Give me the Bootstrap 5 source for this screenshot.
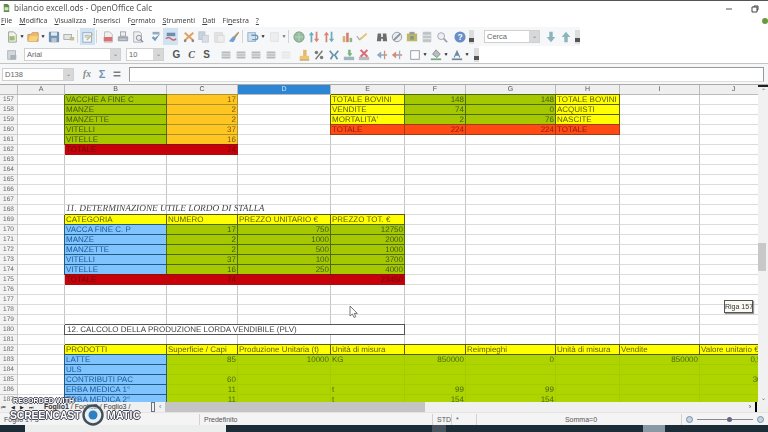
<!DOCTYPE html>
<html lang="it">
<head>
    <meta charset="UTF-8">
    <title>bilancio excell.ods - OpenOffice Calc</title>
    <link href="https://cdn.jsdelivr.net/npm/bootstrap@5.3.0/dist/css/bootstrap.min.css" rel="stylesheet">
    <style>
        html, body { width: 768px; height: 432px; overflow: hidden; background: #fff; }
        body { font-family: "Liberation Sans", Arial, sans-serif; font-size: 8px; color: #333; }
        #app { width: 768px; height: 432px; filter: blur(.45px); }

        .title-bar { height: 15px; border-top: 1px solid #555; font-family: "Noto Sans", sans-serif; font-size: 8.2px; color: #555; padding-left: 3px; }
        .menu-bar { height: 12px; font-family: "Noto Sans", sans-serif; font-size: 7px; color: #444; padding-left: 1px; gap: 7px; }
        .menu-bar u { text-underline-offset: 1px; }
        .win-btn { width: 26px; text-align: center; }
        .tool-row { height: 19px; background: #f6f7f8; }
        .tool-row.second { height: 18px; border-bottom: 1px solid #c4c4c4; }
        .tool-end { background: #fff; height: 100%; }
        .ic { width: 15px; height: 15px; flex: none; display: flex; align-items: center; justify-content: center; }
        .ic svg { width: 12px; height: 12px; opacity: .7; }
        .ic.on { background: #cfe3f3; height: 17px; }
        .ar { width: 6px; flex: none; text-align: center; font-size: 5px; line-height: 1; color: #222; }
        .sp3 { width: 3px; flex: none; } .sp4 { width: 4px; flex: none; } .sp5 { width: 5px; flex: none; }
        .sep { width: 1px; height: 13px; background: #d4d4d4; flex: none; margin: 0 2px 0 1px; }
        .grip { width: 4px; height: 14px; flex: none; background-image: radial-gradient(#aaa 35%, transparent 40%); background-size: 2px 2px; }
        .more { width: 5px; height: 14px; flex: none; background: linear-gradient(#ddd 60%, #555 60%, #555 85%, #ddd 85%); }
        .combo { height: 13px; background: #fff; border: 1px solid #d0d0d0; flex: none; display: flex; color: #666; font-size: 7.5px; line-height: 11px; padding-left: 2px; justify-content: space-between; padding-right: 0; }
        .combo i { width: 10px; background: #d8d8d8; color: #777; font-style: normal; font-size: 6px; text-align: center; }
        .letter { width: 15px; flex: none; text-align: center; font-size: 10px; font-weight: 700; color: #555; }

        .formula-bar { height: 21px; background: #f6f7f8; padding: 1px 4px 1px 2px; border-bottom: 1px solid #aaa; }
        .formula-input { flex: 1; height: 15px; background: #fff; border: 1px solid #999; border-bottom-color: #ddd; margin-left: 5px; }

        .sheet-main { height: 317px; }
        .grid-wrap { width: 758px; height: 317px; overflow: hidden; }
        table.sheet { table-layout: fixed; width: 768px; border-collapse: separate; border-spacing: 0; font-size: 8px; text-rendering: geometricPrecision; }
        table.sheet th, table.sheet td { height: 10px; padding: 0 1px; line-height: 9px; white-space: nowrap; border-style: solid; border-width: 0 1px 1px 0; border-color: #dcdcdc #c6c6c6; color: #333; font-weight: 400; }
        table.sheet thead th { background: #efefef; color: #555; text-align: center; font-size: 7px; border-color: #bbb; }
        table.sheet thead th.cur { background: #2c86d4; color: #cfe6fa; }
        table.sheet tbody th { background: #f3f3f3; color: #666; text-align: center; font-size: 6.5px; border-color: #ccc; }
        td.num { text-align: right; }
        /* right + bottom are the cell's border, left + top a shadow laid over the neighbour's border */
        table.sheet td.g { background: #a6c800; color: #3e5a10; border-color: #4e6a12; box-shadow: -1px 0 0 #4e6a12, 0 -1px 0 #4e6a12; }
        table.sheet td.o { background: #ffc521; color: #7a5a10; border-color: #a89430; box-shadow: 0 -1px 0 #a89430; }
        table.sheet td.y { background: #ffff00; color: #5c5c08; border-color: #5a5a10; box-shadow: -1px 0 0 #5a5a10, 0 -1px 0 #5a5a10; }
        table.sheet td.f { background: #ff4a14; color: #8e1c10; border-color: #a03a10; box-shadow: -1px 0 0 #a03a10, 0 -1px 0 #a03a10; }
        table.sheet td.r { background: #c8000a; color: #6a0a0a; border-color: #a81010; box-shadow: 0 -1px 0 #8a1010; }
        table.sheet td.b { background: #80c4ff; color: #1f5a96; border-color: #235a80; box-shadow: -1px 0 0 #235a80, 0 -1px 0 #235a80; }
        table.sheet td.l { background: #aed500; color: #4a6a10; border-color: #a6cc00; }
        table.sheet td.box { border-color: #555; box-shadow: -1px 0 0 #555, 0 -1px 0 #555; color: #444; font-size: 8px; padding-left: 2px; }
        table.sheet td.head11 { font-family: "Liberation Serif", serif; font-style: italic; font-size: 9.3px; color: #444; vertical-align: bottom; overflow: visible; }

        .vscroll { width: 10px; background: #f1f1f1; position: relative; }
        .vscroll .thumb { position: absolute; left: 0; top: 158px; width: 8px; height: 28px; background: #c8c8c8; }
        .vscroll .tick { height: 2px; background: #222; }
        .arrow-txt { font-size: 6px; line-height: 8px; color: #666; text-align: center; }

        .tab-bar { height: 10px; background: #f0f0f0; font-size: 7px; line-height: 10px; color: #333; }
        .tab-nav { width: 44px; padding-left: 1px; font-size: 5px; gap: 5px; color: #222; }
        .tab-list { width: 107px; white-space: nowrap; }
        .tab-list b { font-weight: 700; }
        .hthumb { width: 260px; height: 10px; background: #c4c4c4; }
        .htrack { flex: 1; }

        .status-bar { height: 13px; background: #f4f4f4; font-size: 7px; line-height: 13px; color: #555; border-top: 1px solid #e4e4e4; }
        .st { border-right: 1px solid #d2d2d2; height: 11px; line-height: 11px; padding-left: 4px; flex: none; }
        .zoom-track { flex: 1; height: 1px; background: #889; position: relative; }
        .zoom-dot { position: absolute; left: 30px; top: -2px; width: 5px; height: 5px; border-radius: 50%; background: #668; }
        .zoom-btn { width: 7px; height: 7px; border-radius: 50%; border: 1px solid #7a8ea0; background: #c4d4e2; flex: none; }

        .task-bar { height: 7px; background: #1d2d38; }
        .task-light { width: 201px; margin-left: 25px; height: 7px; background: #eceded; }
        .task-item { height: 7px; background: #46535c; flex: none; }

        .tip-box { position: absolute; left: 724px; top: 300px; width: 29px; height: 13px; background: #fbfbf4; border: 1px solid #555; box-shadow: 1px 1px 1px #999; font-size: 7px; line-height: 11px; text-align: center; color: #333; white-space: nowrap; }
        .cursor-pos { position: absolute; left: 349px; top: 305px; width: 9px; height: 13px; }
        .wm { position: absolute; left: 0; top: 394px; width: 160px; height: 32px; color: #fff; font-weight: 700; text-shadow: -1px 0 0 #445, 1px 0 0 #445, 0 -1px 0 #445, 0 1px 0 #445; }
        .wm-top { position: absolute; left: 13px; top: 2px; font-size: 7px; letter-spacing: .1px; white-space: nowrap; }
        .wm-main { position: absolute; left: 10px; top: 14px; font-size: 10.500px; letter-spacing: -.2px; }
        .wm-side { position: absolute; left: 107px; top: 14px; font-size: 10.500px; letter-spacing: .2px; }
        .wm-ring { position: absolute; left: 82px; top: 10px; width: 22px; height: 22px; }
    </style>
</head>
<body class="position-relative">
<svg width="0" height="0" class="position-absolute">
    <symbol id="i-doc" viewBox="0 0 14 14"><path d="M3 1h6l3 3v9H3z" fill="#eee" stroke="#6a7a50"/><rect x="4" y="6" width="6" height="5" fill="#7ba23a"/></symbol>
    <symbol id="i-open" viewBox="0 0 14 14"><path d="M1 4h4l1-2h7v10H1z" fill="#f0a030" stroke="#b06a10"/><path d="M4 6h9l-2 6H1z" fill="#f7c64c"/></symbol>
    <symbol id="i-save" viewBox="0 0 14 14"><rect x="1" y="1" width="12" height="12" rx="1" fill="#3a6a94"/><rect x="3.500" y="1.500" width="7" height="4" fill="#dce6ee"/><rect x="4" y="8" width="6" height="5" fill="#9ab4c8"/></symbol>
    <symbol id="i-mail" viewBox="0 0 14 14"><rect x="1" y="4" width="9" height="6" fill="#ddd" stroke="#888"/><rect x="8" y="7" width="5" height="4" fill="#b0a070"/></symbol>
    <symbol id="i-edit" viewBox="0 0 14 14"><rect x="1" y="2" width="10" height="11" fill="#fff" stroke="#7a8a9a"/><path d="M3 5h6M3 7h5" stroke="#88a"/><path d="M5 10l7-7 1 1-7 7z" fill="#c8a830"/></symbol>
    <symbol id="i-pdf" viewBox="0 0 14 14"><path d="M3 1h6l3 3v9H3z" fill="#eee" stroke="#999"/><rect x="2" y="7" width="10" height="5" fill="#d03838"/></symbol>
    <symbol id="i-print" viewBox="0 0 14 14"><rect x="4" y="1" width="6" height="5" fill="#eee" stroke="#778"/><rect x="1" y="6" width="12" height="6" rx="1" fill="#7c8894"/><rect x="3" y="9" width="8" height="1" fill="#ddd"/></symbol>
    <symbol id="i-prev" viewBox="0 0 14 14"><path d="M2 1h7l2 2v10H2z" fill="#eee" stroke="#889"/><circle cx="8" cy="8" r="3" fill="#dfe9f0" stroke="#556"/><path d="M10 10l3 3" stroke="#556" stroke-width="1.500"/></symbol>
    <symbol id="i-spell" viewBox="0 0 14 14"><path d="M2 8l4 4 6-9-6 5-2-2z" fill="#3b78a8"/><path d="M3 1h8v3H3z" fill="#6c8aa0"/></symbol>
    <symbol id="i-aspell" viewBox="0 0 14 14"><rect x="2" y="2" width="10" height="4" fill="#4a6a90"/><path d="M1 9q3-3 6 0t6 0" fill="none" stroke="#d03030" stroke-width="1.600"/></symbol>
    <symbol id="i-cut" viewBox="0 0 14 14"><path d="M2 2l10 9M12 2L2 11" stroke="#d87a20" stroke-width="2.200"/><circle cx="2.500" cy="11.500" r="1.500" fill="#555"/><circle cx="11.500" cy="11.500" r="1.500" fill="#555"/></symbol>
    <symbol id="i-copy" viewBox="0 0 14 14"><rect x="1" y="1" width="7" height="9" fill="#b4c4d4" stroke="#a0aab4"/><rect x="5" y="5" width="7" height="8" fill="#ccd6e0" stroke="#b0b8c0"/></symbol>
    <symbol id="i-paste" viewBox="0 0 14 14"><rect x="2" y="2" width="9" height="11" fill="#ddd" stroke="#ccc"/><rect x="5" y="5" width="8" height="8" fill="#eaeaea" stroke="#ccc"/></symbol>
    <symbol id="i-brush" viewBox="0 0 14 14"><path d="M12 1L6 7l2 2 5-7z" fill="#8a6a30"/><path d="M6 6l3 3-3 4-5-1z" fill="#3a7ac0"/></symbol>
    <symbol id="i-undo" viewBox="0 0 14 14"><rect x="1" y="2" width="9" height="10" fill="#c8d8e8" stroke="#5a8ab0"/><path d="M5 5h5a2 2 0 010 5H6" fill="none" stroke="#2a70a8" stroke-width="1.600"/></symbol>
    <symbol id="i-redo" viewBox="0 0 14 14"><rect x="3" y="2" width="9" height="10" fill="#e8ecee" stroke="#d4d8dc"/></symbol>
    <symbol id="i-nav" viewBox="0 0 14 14"><circle cx="7" cy="7" r="6" fill="#6fa47a" stroke="#4a7a58"/><path d="M2 7h10M7 2v10" stroke="#a8ccb0"/></symbol>
    <symbol id="i-sa" viewBox="0 0 14 14"><path d="M4 1l3 4H5v8H3V5H1z" fill="#2f8f9f"/><path d="M10 13l3-4h-2V1H9v8H7z" fill="#d0503a"/></symbol>
    <symbol id="i-sd" viewBox="0 0 14 14"><path d="M4 1l3 4H5v8H3V5H1z" fill="#d0503a"/><path d="M10 13l3-4h-2V1H9v8H7z" fill="#2f8f9f"/></symbol>
    <symbol id="i-chart" viewBox="0 0 14 14"><rect x="2" y="6" width="3" height="7" fill="#d09030"/><rect x="6" y="2" width="3" height="11" fill="#c05040"/><rect x="10" y="8" width="3" height="5" fill="#6a9a40"/></symbol>
    <symbol id="i-pen" viewBox="0 0 14 14"><path d="M1 6l3 4 2-2" fill="none" stroke="#88a" stroke-width="1.400"/><path d="M5 11l8-7-1-2-8 7z" fill="#d8b040"/></symbol>
    <symbol id="i-bino" viewBox="0 0 14 14"><path d="M2 3h4v4h2V3h4l1 9H8V9H6v3H1z" fill="#333"/></symbol>
    <symbol id="i-comp" viewBox="0 0 14 14"><circle cx="7" cy="7" r="5.500" fill="#e4e8ec" stroke="#667"/><path d="M3 11l8-8" stroke="#567" stroke-width="2"/></symbol>
    <symbol id="i-gal" viewBox="0 0 14 14"><rect x="1" y="3" width="12" height="9" fill="#a89a30"/><rect x="4" y="1" width="6" height="3" fill="#777"/><rect x="5" y="6" width="4" height="4" fill="#3a7a4a"/></symbol>
    <symbol id="i-db" viewBox="0 0 14 14"><rect x="2" y="1" width="10" height="12" rx="1" fill="#aab0b4"/><path d="M2 5h10M2 9h10" stroke="#eee"/></symbol>
    <symbol id="i-mag" viewBox="0 0 14 14"><circle cx="6" cy="6" r="4" fill="#e6eef4" stroke="#778"/><path d="M9 9l4 4" stroke="#778" stroke-width="2"/></symbol>
    <symbol id="i-down" viewBox="0 0 14 14"><path d="M5 1h4v6h3l-5 6-5-6h3z" fill="#5f9aa0"/></symbol>
    <symbol id="i-up" viewBox="0 0 14 14"><path d="M5 13h4V7h3L7 1 2 7h3z" fill="#5f9aa0"/></symbol>
    <symbol id="i-style" viewBox="0 0 14 14"><rect x="2" y="2" width="9" height="10" fill="#c4ccd4" stroke="#8a949c"/><rect x="5" y="7" width="7" height="5" fill="#8a949c"/></symbol>
    <symbol id="i-al" viewBox="0 0 14 14"><rect x="2" y="3" width="10" height="8" fill="#8c9298"/><path d="M2 5h10M2 7h10M2 9h10" stroke="#e8e8e8"/></symbol>
    <symbol id="i-cur" viewBox="0 0 14 14"><rect x="6" y="1" width="4" height="10" fill="#d8a030"/><rect x="2" y="8" width="11" height="5" fill="#e8b040"/><path d="M2 13h11" stroke="#a06a10"/></symbol>
    <symbol id="i-pct" viewBox="0 0 14 14"><path d="M3 12L11 2" stroke="#444" stroke-width="1.600"/><circle cx="4" cy="4" r="2" fill="#444"/><circle cx="10" cy="10" r="2" fill="#444"/></symbol>
    <symbol id="i-n1" viewBox="0 0 14 14"><path d="M2 2l4 5-3 5M12 2L8 7l3 5" fill="none" stroke="#2a6a90" stroke-width="2"/></symbol>
    <symbol id="i-n2" viewBox="0 0 14 14"><rect x="1" y="9" width="12" height="4" fill="#7a9aa4"/><path d="M6 1h3v4h2l-3 4-3-4h1z" fill="#4a9a50"/></symbol>
    <symbol id="i-n3" viewBox="0 0 14 14"><rect x="1" y="9" width="12" height="4" fill="#a0a4a8"/><path d="M3 1l8 8M11 1L3 9" stroke="#d03040" stroke-width="2.400"/></symbol>
    <symbol id="i-in" viewBox="0 0 14 14"><path d="M1 7l5-4v3h7v2H6v3z" fill="#5a8ab0"/><path d="M10 2v10" stroke="#d06040" stroke-width="1.500"/></symbol>
    <symbol id="i-out" viewBox="0 0 14 14"><path d="M1 7l5-4v3h7v2H6v3z" fill="#c86040"/><path d="M10 2v10" stroke="#6a94b4" stroke-width="1.500"/></symbol>
    <symbol id="i-bord" viewBox="0 0 14 14"><rect x="2" y="2" width="10" height="10" fill="#fff" stroke="#667"/></symbol>
    <symbol id="i-fill" viewBox="0 0 14 14"><path d="M3 6l4-5 5 5-4 4z" fill="#9aa8a0" stroke="#556"/><rect x="1" y="11" width="12" height="2" fill="#3a8a50"/></symbol>
    <symbol id="i-txt" viewBox="0 0 14 14"><path d="M7 1l4 9H9.500L8.700 8H5.300L4.500 10H3z" fill="#3a5a80"/><rect x="1" y="11" width="12" height="2" fill="#3a5a80"/></symbol>
</svg>

<div id="app" class="d-flex flex-column">
    <!-- title + menu -->
    <div class="title-bar d-flex align-items-center">
        <svg width="7" height="10" viewBox="0 0 9 10" class="me-1"><path d="M1 0h5l2 2v8H1z" fill="#5f8f4a"/><rect x="2" y="4" width="5" height="4" fill="#d8e4c8"/></svg>
        <span>bilancio excell.ods - OpenOffice Calc</span>
        <div class="ms-auto d-flex align-items-center">
            <span class="win-btn"><svg width="8" height="8"><path d="M1 4h6" stroke="#555"/></svg></span>
            <span class="win-btn"><svg width="8" height="8"><path d="M1 2h5v5H1zM3 2V1h4v4H6" fill="none" stroke="#444"/></svg></span>
        </div>
    </div>
    <div class="menu-bar d-flex align-items-center">
        <span><u>F</u>ile</span><span><u>M</u>odifica</span><span><u>V</u>isualizza</span><span><u>I</u>nserisci</span><span>F<u>o</u>rmato</span><span><u>S</u>trumenti</span><span><u>D</u>ati</span><span>Fi<u>n</u>estra</span><span><u>?</u></span>
        <svg class="ms-auto" width="7" height="8"><circle cx="4" cy="4" r="3" fill="#6a9a3a"/></svg>
    </div>

    <!-- standard toolbar -->
    <div class="tool-row d-flex align-items-center">
        <span class="grip"></span>
        <span class="ic"><svg><use href="#i-doc"/></svg></span><span class="ar">&#9660;</span>
        <span class="ic"><svg><use href="#i-open"/></svg></span><span class="ar">&#9660;</span>
        <span class="ic"><svg><use href="#i-save"/></svg></span>
        <span class="ic"><svg><use href="#i-mail"/></svg></span>
        <span class="sep"></span><span class="ic on"><svg><use href="#i-edit"/></svg></span><span class="sep" style="margin-right:3px"></span>
        <span class="ic"><svg><use href="#i-pdf"/></svg></span>
        <span class="ic"><svg><use href="#i-print"/></svg></span>
        <span class="ic"><svg><use href="#i-prev"/></svg></span>
        <span class="sp3"></span>
        <span class="ic"><svg><use href="#i-spell"/></svg></span>
        <span class="ic on"><svg><use href="#i-aspell"/></svg></span>
        <span class="sp3"></span>
        <span class="ic"><svg><use href="#i-cut"/></svg></span>
        <span class="ic"><svg><use href="#i-copy"/></svg></span>
        <span class="ic"><svg><use href="#i-paste"/></svg></span>
        <span class="ic"><svg><use href="#i-brush"/></svg></span>
        <span class="sep"></span>
        <span class="ic"><svg><use href="#i-undo"/></svg></span><span class="ar">&#9660;</span>
        <span class="ic"><svg><use href="#i-redo"/></svg></span><span class="ar text-secondary">&#9660;</span>
        <span class="sep"></span>
        <span class="ic"><svg><use href="#i-nav"/></svg></span>
        <span class="ic"><svg><use href="#i-sa"/></svg></span>
        <span class="ic"><svg><use href="#i-sd"/></svg></span>
        <span class="sp3"></span>
        <span class="ic"><svg><use href="#i-chart"/></svg></span>
        <span class="ic"><svg><use href="#i-pen"/></svg></span>
        <span class="sp5"></span>
        <span class="ic"><svg><use href="#i-bino"/></svg></span>
        <span class="ic"><svg><use href="#i-comp"/></svg></span>
        <span class="ic"><svg><use href="#i-gal"/></svg></span>
        <span class="ic"><svg><use href="#i-db"/></svg></span>
        <span class="ic"><svg><use href="#i-mag"/></svg></span>
        <span class="sp3"></span>
        <span class="ic"><svg viewBox="0 0 14 14"><circle cx="7" cy="7" r="6.500" fill="#2b63b4"/><text x="7" y="10.500" text-anchor="middle" font-size="10" font-weight="700" fill="#fff" font-family="Liberation Sans">?</text></svg></span>
        <span class="more" style="margin-left:2px"></span>
        <span class="grip" style="width:3px;margin-left:6px"></span>
        <span class="combo" style="width:56px;margin-left:1px">Cerca<i>&#8964;</i></span>
        <span class="sp3"></span>
        <span class="ic"><svg><use href="#i-down"/></svg></span>
        <span class="ic"><svg><use href="#i-up"/></svg></span>
        <span class="more" style="margin-left:2px"></span>
        <span class="tool-end flex-grow-1"></span>
    </div>

    <!-- formatting toolbar -->
    <div class="tool-row second d-flex align-items-center">
        <span class="grip"></span>
        <span class="ic"><svg><use href="#i-style"/></svg></span>
        <span class="combo" style="width:97px;margin-left:5px">Arial<i>&#8964;</i></span>
        <span class="combo" style="width:38px;margin-left:5px">10<i>&#8964;</i></span>
        <span class="sp5"></span>
        <span class="letter">G</span><span class="letter fst-italic" style="font-family:'Liberation Serif',serif">C</span><span class="letter">S</span>
        <span class="sp4"></span>
        <span class="ic"><svg><use href="#i-al"/></svg></span>
        <span class="ic"><svg><use href="#i-al"/></svg></span>
        <span class="ic"><svg><use href="#i-al"/></svg></span>
        <span class="ic"><svg><use href="#i-al"/></svg></span>
        <span class="ic opacity-25"><svg><use href="#i-al"/></svg></span>
        <span class="sp3"></span>
        <span class="ic"><svg><use href="#i-cur"/></svg></span>
        <span class="ic"><svg><use href="#i-pct"/></svg></span>
        <span class="ic"><svg><use href="#i-n1"/></svg></span>
        <span class="ic"><svg><use href="#i-n2"/></svg></span>
        <span class="ic"><svg><use href="#i-n3"/></svg></span>
        <span class="sp3"></span>
        <span class="ic"><svg><use href="#i-in"/></svg></span>
        <span class="ic"><svg><use href="#i-out"/></svg></span>
        <span class="sp3"></span>
        <span class="ic"><svg><use href="#i-bord"/></svg></span><span class="ar">&#9660;</span>
        <span class="ic"><svg><use href="#i-fill"/></svg></span><span class="ar">&#9660;</span>
        <span class="ic"><svg><use href="#i-txt"/></svg></span><span class="ar">&#9660;</span>
        <span class="more" style="margin-left:4px"></span>
        <span class="tool-end flex-grow-1"></span>
    </div>

    <!-- formula bar -->
    <div class="formula-bar d-flex align-items-center">
        <span class="combo" style="width:72px">D138<i>&#8964;</i></span>
        <span class="sp5"></span>
        <span class="ic"><svg viewBox="0 0 14 14"><text x="7" y="11" text-anchor="middle" font-size="11" font-style="italic" font-weight="700" font-family="Liberation Serif" fill="#555">fx</text></svg></span>
        <span class="ic"><svg viewBox="0 0 14 14"><text x="7" y="12" text-anchor="middle" font-size="13" font-weight="700" font-family="Liberation Sans" fill="#3a6a9a">&#931;</text></svg></span>
        <span class="ic"><svg viewBox="0 0 14 14"><path d="M3 5h8M3 9h8" stroke="#445" stroke-width="1.600"/></svg></span>
        <div class="formula-input"></div>
    </div>

    <!-- sheet -->
    <div class="sheet-main d-flex">
        <div class="grid-wrap">
            <table class="sheet">
                <colgroup><col style="width:18px"><col style="width:47px"><col style="width:102px"><col style="width:71px"><col style="width:93px"><col style="width:74px"><col style="width:61px"><col style="width:90px"><col style="width:64px"><col style="width:80px"><col style="width:68px"></colgroup>
                <thead><tr><th></th><th>A</th><th>B</th><th>C</th><th class="cur">D</th><th>E</th><th>F</th><th>G</th><th>H</th><th>I</th><th>J</th></tr></thead>
                <tbody id="rows"></tbody>
            </table>
        </div>
        <div class="vscroll flex-grow-1">
            <div class="tick"></div>
            <div class="arrow-txt">&#8963;</div>
            <div class="thumb"></div>
            <div class="arrow-txt position-absolute bottom-0 w-100">&#8964;</div>
        </div>
    </div>

    <!-- tabs + horizontal scrollbar -->
    <div class="tab-bar d-flex">
        <div class="tab-nav d-flex">
            <span>&#9198;</span><span>&#9664;</span><span>&#9654;</span><span>&#9197;</span>
        </div>
        <div class="tab-list"><b>Foglio1</b> / Foglio2 / Foglio3 /</div>
        <span class="border border-secondary" style="width:4px;height:10px"></span>
        <span class="px-1 text-secondary">&#8249;</span>
        <div class="hthumb"></div>
        <div class="htrack"></div>
        <span class="pe-1">&#8250;</span>
        <span class="bg-black" style="width:2px;height:10px;margin-right:11px"></span>
    </div>

    <!-- status bar -->
    <div class="status-bar d-flex align-items-center">
        <span class="st" style="width:200px">Foglio 1 / 3</span>
        <span class="st" style="width:233px">Predefinito</span>
        <span class="st" style="width:19px">STD</span>
        <span class="st" style="width:25px">*</span>
        <span class="st text-center" style="width:205px">Somma=0</span>
        <div class="d-flex align-items-center flex-grow-1 ps-1 pe-1 gap-1">
            <span class="zoom-btn"></span><span class="zoom-track"><span class="zoom-dot"></span></span><span class="zoom-btn"></span>
        </div>
    </div>

    <!-- taskbar -->
    <div class="task-bar d-flex">
        <div class="task-light"></div>
        <div class="task-item" style="width:14px;margin-left:206px"></div>
        <div class="task-item" style="width:22px;margin-left:197px;background:#8a9aa4"></div>
    </div>

    <div class="tip-box">Riga 157</div>
    <svg class="cursor-pos" viewBox="0 0 9 13"><path d="M1 1v10l2.500-2 1.500 3.500 1.800-.8-1.500-3.300h3z" fill="#fff" stroke="#555" stroke-width=".8"/></svg>

    <div class="wm">
        <span class="wm-top">RECORDED WITH</span>
        <span class="wm-main">SCREENCAST</span>
        <svg class="wm-ring" viewBox="0 0 22 22"><circle cx="11" cy="11" r="9.500" fill="#e8eef2" fill-opacity=".5" stroke="#3f4f5c" stroke-width="2.400"/><circle cx="11" cy="11" r="4.500" fill="#2d7fc4"/></svg>
        <span class="wm-side">MATIC</span>
    </div>
</div>

<script src="https://cdn.jsdelivr.net/npm/bootstrap@5.3.0/dist/js/bootstrap.bundle.min.js"></script>
<script>
    // cell = [text, class, right aligned]
    const cols = ['A','B','C','D','E','F','G','H','I','J'];
    const data = {
        157:{B:['VACCHE A FINE C','g'],C:['17','o',1],E:['TOTALE BOVINI','y'],F:['148','g',1],G:['148','g',1],H:['TOTALE BOVINI','y']},
        158:{B:['MANZE','g'],C:['2','o',1],E:['VENDITE','y'],F:['74','g',1],G:['0','g',1],H:['ACQUISTI','y']},
        159:{B:['MANZETTE','g'],C:['2','o',1],E:["MORTALITA'",'y'],F:['2','g',1],G:['76','g',1],H:['NASCITE','y']},
        160:{B:['VITELLI','g'],C:['37','o',1],E:['TOTALE','f'],F:['224','f',1],G:['224','f',1],H:['TOTALE','f']},
        161:{B:['VITELLE','g'],C:['16','o',1]},
        162:{B:['TOTALE','r'],C:['74','r',1]},
        168:{B:['11. DETERMINAZIONE UTILE LORDO DI STALLA','head11']},
        169:{B:['CATEGORIA','y'],C:['NUMERO','y'],D:['PREZZO UNITARIO €','y'],E:['PREZZO TOT. €','y']},
        170:{B:['VACCA FINE C. P','b'],C:['17','g',1],D:['750','g',1],E:['12750','g',1]},
        171:{B:['MANZE','b'],C:['2','g',1],D:['1000','g',1],E:['2000','g',1]},
        172:{B:['MANZETTE','b'],C:['2','g',1],D:['500','g',1],E:['1000','g',1]},
        173:{B:['VITELLI','b'],C:['37','g',1],D:['100','g',1],E:['3700','g',1]},
        174:{B:['VITELLE','b'],C:['16','g',1],D:['250','g',1],E:['4000','g',1]},
        175:{B:['TOTALE','r'],C:['74','r',1],D:['','r'],E:['23450','r',1]},
        182:{B:['PRODOTTI','y'],C:['Superficie / Capi','y'],D:['Produzione Unitaria (t)','y'],E:['Unità di misura','y'],F:['','y'],G:['Reimpieghi','y'],H:['Unità di misura','y'],I:['Vendite','y'],J:['Valore unitario €','y']},
        183:{B:['LATTE','b'],C:['85','l',1],D:['10000','l',1],E:['KG','l'],F:['850000','l',1],G:['0','l',1],H:['','l'],I:['850000','l',1],J:['0,50','l',1]},
        184:{B:['ULS','b'],C:['','l'],D:['','l'],E:['','l'],F:['','l'],G:['','l'],H:['','l'],I:['','l'],J:['','l']},
        185:{B:['CONTRIBUTI PAC','b'],C:['60','l',1],D:['','l'],E:['','l'],F:['','l'],G:['','l'],H:['','l'],I:['','l'],J:['300','l',1]},
        186:{B:['ERBA MEDICA 1°','b'],C:['11','l',1],D:['','l'],E:['t','l'],F:['99','l',1],G:['99','l',1],H:['','l'],I:['','l'],J:['','l']},
        187:{B:['ERBA MEDICA 2°','b'],C:['11','l',1],D:['','l'],E:['t','l'],F:['154','l',1],G:['154','l',1],H:['','l'],I:['','l'],J:['','l']}
    };

    let html = '';
    for (let n = 157; n <= 187; n++) {
        html += `<tr><th>${n}</th>`;
        if (n === 180) {
            // merged title box over B:E
            html += '<td></td><td colspan="4" class="box">12. CALCOLO DELLA PRODUZIONE LORDA VENDIBILE (PLV)</td><td></td><td></td><td></td><td></td><td></td>';
        } else {
            cols.forEach(c => {
                const cell = (data[n] || {})[c];
                if (cell) html += `<td class="${cell[1]}${cell[2] ? ' num' : ''}">${cell[0]}</td>`;
                else html += '<td></td>';
            });
        }
        html += '</tr>';
    }
    document.getElementById('rows').innerHTML = html;
</script>
</body>
</html>
